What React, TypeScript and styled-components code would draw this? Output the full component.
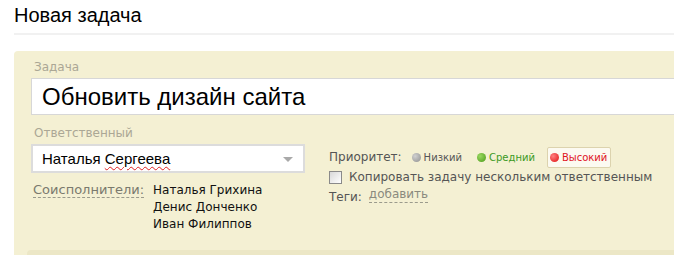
import styled, { createGlobalStyle } from 'styled-components';

const Global = createGlobalStyle`
  html, body {
    margin: 0;
    padding: 0;
    background: #ffffff;
    overflow: hidden;
  }
  body {
    font-family: 'DejaVu Sans', Verdana, sans-serif;
  }
`;

const Page = styled.div`
  width: 674px;
  height: 255px;
  overflow: hidden;
`;

const Header = styled.h1`
  margin: 0 0 0 14px;
  padding: 4px 0 7px;
  font-family: 'Liberation Sans', Arial, sans-serif;
  font-weight: normal;
  font-size: 20px;
  line-height: 22px;
  color: #000;
  border-bottom: 2px solid #f1f1f1;
`;

const Panel = styled.div`
  margin: 16px 0 0 14px;
  background: #f4f0d3;
  border-top-left-radius: 4px;
  padding: 9px 0 0 17px;
  height: 205px;
  box-sizing: border-box;
  display: flex;
  flex-direction: column;
`;

const FieldLabel = styled.div`
  font-size: 12px;
  line-height: 15px;
  color: #aba795;
  padding-left: 3px;
  margin-bottom: 3px;
`;

const TitleInput = styled.div`
  width: 700px;
  height: 37px;
  flex-shrink: 0;
  box-sizing: border-box;
  background: #fff;
  border: 1px solid #d7d7d7;
  padding-left: 10px;
  font-family: 'Liberation Sans', Arial, sans-serif;
  font-size: 24px;
  line-height: 35px;
  color: #000;
`;

const Columns = styled.div`
  display: flex;
  flex-shrink: 0;
  margin-top: 11px;
`;

const LeftCol = styled.div`
  width: 274px;
  display: flex;
  flex-direction: column;
`;

const RightCol = styled.div`
  margin-left: 24px;
  padding-top: 21px;
  display: flex;
  flex-direction: column;
`;

const Select = styled.div`
  width: 274px;
  height: 29px;
  box-sizing: border-box;
  background: #fff;
  border: 2px solid #dcdcdc;
  padding: 0 0 0 9px;
  display: flex;
  align-items: center;
  justify-content: space-between;
  font-family: 'Liberation Sans', Arial, sans-serif;
  font-size: 15px;
  color: #000;
`;

const Misspelled = styled.span`
  text-decoration: underline wavy #e02020;
  text-decoration-thickness: 1px;
  text-underline-offset: 2px;
`;

const Arrow = styled.span`
  width: 0;
  height: 0;
  margin-right: 10px;
  margin-top: 2px;
  border-left: 5px solid transparent;
  border-right: 5px solid transparent;
  border-top: 5px solid #a9a9a9;
`;

const CoRow = styled.div`
  display: flex;
  margin-top: 9px;
  padding-left: 2px;
`;

const DashedLink = styled.span<{ $color?: string; $size?: number }>`
  color: ${(p) => p.$color || '#7a7a6e'};
  border-bottom: 1px dashed #9a9a8c;
  font-size: ${(p) => p.$size || 12}px;
  line-height: 15px;
  align-self: flex-start;
`;

const Names = styled.div`
  margin-left: 9px;
  display: flex;
  flex-direction: column;
  font-size: 12px;
  line-height: 17px;
  color: #111;
`;

const Row = styled.div`
  display: flex;
  flex-shrink: 0;
  align-items: center;
  font-size: 12px;
  color: #555;
  height: 20px;
`;

const RowLabel = styled.span`
  margin-right: 7px;
`;

const Priority = styled.span<{ $color: string; $active?: boolean }>`
  display: inline-flex;
  align-items: center;
  gap: 3px;
  font-size: 10px;
  color: ${(p) => p.$color};
  height: 19px;
  padding: 0 3px 0 2px;
  margin-right: 8px;
  border: 1px solid ${(p) => (p.$active ? '#dcd3ae' : 'transparent')};
  background: ${(p) => (p.$active ? '#fcfaf1' : 'transparent')};
  border-radius: 2px;
`;

const Dot = styled.span<{ $c1: string; $c2: string }>`
  width: 9px;
  height: 9px;
  border-radius: 50%;
  background: radial-gradient(circle at 35% 35%, ${(p) => p.$c1}, ${(p) => p.$c2});
`;

const Check = styled.span`
  width: 11px;
  height: 11px;
  border: 1px solid #8a8a8a;
  background: linear-gradient(135deg, #d8d8d8, #ffffff);
  margin-right: 7px;
`;

const Footer = styled.div`
  margin: auto 0 0 -4px;
  height: 6px;
  flex-shrink: 0;
  background: #ece7c6;
  border-top-left-radius: 4px;
`;

export default function App() {
  return (
    <Page>
      <Global />
      <Header>Новая задача</Header>
      <Panel>
        <FieldLabel>Задача</FieldLabel>
        <TitleInput>Обновить дизайн сайта</TitleInput>
        <Columns>
          <LeftCol>
            <FieldLabel>Ответственный</FieldLabel>
            <Select>
              <span>
                Наталья <Misspelled>Сергеева</Misspelled>
              </span>
              <Arrow />
            </Select>
            <CoRow>
              <DashedLink $size={13}>Соисполнители:</DashedLink>
              <Names>
                <span>Наталья Грихина</span>
                <span>Денис Донченко</span>
                <span>Иван Филиппов</span>
              </Names>
            </CoRow>
          </LeftCol>
          <RightCol>
            <Row>
              <RowLabel>Приоритет:</RowLabel>
              <Priority $color="#555">
                <Dot $c1="#d0d0d0" $c2="#8f8f8f" />
                Низкий
              </Priority>
              <Priority $color="#3a9a1e">
                <Dot $c1="#9ad860" $c2="#4a9a1a" />
                Средний
              </Priority>
              <Priority $color="#e0141e" $active>
                <Dot $c1="#ff8080" $c2="#e01010" />
                Высокий
              </Priority>
            </Row>
            <Row>
              <Check />
              Копировать задачу нескольким ответственным
            </Row>
            <Row>
              <RowLabel>Теги:</RowLabel>
              <DashedLink $color="#8a8a7e">добавить</DashedLink>
            </Row>
          </RightCol>
        </Columns>
        <Footer />
      </Panel>
    </Page>
  );
}
